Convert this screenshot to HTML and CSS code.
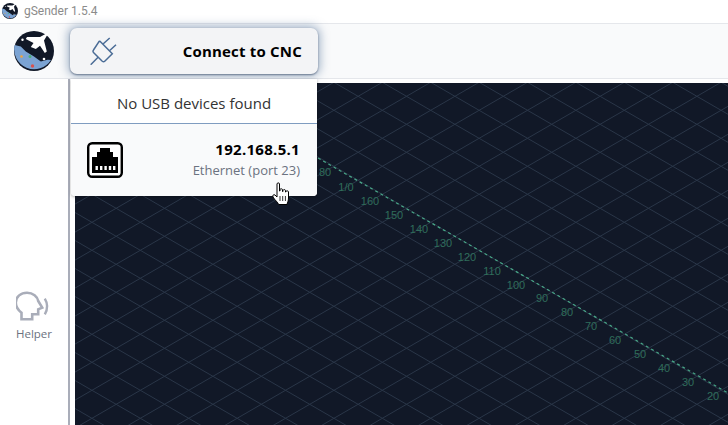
FILE: index.html
```html
<!DOCTYPE html>
<html>

<head>
  <title>gSender</title>
  <link rel="stylesheet" href="styles.css">
</head>

<body>

  <div class="titlebar">
    <svg class="title-logo" viewBox="0 0 40 40">
      <use href="#logo"></use>
    </svg>
    <span>gSender 1.5.4</span>
  </div>

  <div class="toolbar">
    <svg class="app-logo" viewBox="0 0 40 40">
      <defs>
        <g id="logo">
          <circle cx="20" cy="20" r="20" fill="#111827"></circle>
          <path d="M0.6 14 L6.8 15.5 L11.8 20.5 L20 25.5 L26.8 30.5 L33.5 28.8 L37 29 A20 20 0 0 1 0.6 14 Z" fill="#7ba3d3"></path>
          <path d="M35 1 L26 6 L13 6 L11.8 8 L19.5 12 L16.8 16 L21.8 18 L26 14.8 L30.8 22 L32.8 20.5 L30 9.5 Z" fill="#fff"></path>
          <circle cx="8.5" cy="8.8" r="1.2" fill="#fff"></circle>
          <circle cx="30" cy="28" r="1.3" fill="#fff"></circle>
          <circle cx="7.5" cy="25.5" r="1.3" fill="#f2a33a"></circle>
          <circle cx="16" cy="25.5" r="1.5" fill="#4caf7a"></circle>
          <circle cx="18.5" cy="35" r="1.7" fill="#d9534f"></circle>
        </g>
      </defs>
      <use href="#logo"></use>
    </svg>
    <button class="connect-btn">
      <svg class="plug" viewBox="0 0 28 28">
        <path d="M0.7 27.7 L8.3 20 M9 4.5 Q10 4 11 5.2 L22.3 16.7 L14.5 24.5 Q13.5 25.2 12 24 L3.5 15.5 Q2.5 14.3 3.5 13 Z M13.3 6.7 L19.7 1 M20 13.3 L26 7.7" fill="none" stroke="#4a6c96" stroke-width="1.5"></path>
      </svg>
      <span>Connect to CNC</span>
    </button>
  </div>

  <div class="main">
    <div class="sidebar">
      <div class="helper">
        <svg class="helper-icon" viewBox="1.5 0 35 30">
          <path d="M7 28.3 L7 21.7 C3 18.5 1.3 15.5 1.3 11.7 C1.3 5.5 6.5 1.7 12.5 1.7 C18.5 1.7 23 5.5 23.7 10 L27.7 16.7 L23.7 18.3 L23.7 23.3 L17.7 23.3 L17.7 28.3 Z" fill="none" stroke="#a9adb9" stroke-width="2.6"></path>
          <path d="M30.3 7.7 C33.2 12.5 33.2 18.5 30.3 23.3" fill="none" stroke="#a9adb9" stroke-width="2.4"></path>
        </svg>
        <span>Helper</span>
      </div>
    </div>
    <div class="canvas">
      <svg class="grid" width="653" height="342">
        <!-- falling lines, then rising lines, 28px apart -->
        <path class="mesh" d="M0 -374.5 l653 377.8 M0 -346.5 l653 377.8 M0 -318.5 l653 377.8 M0 -290.5 l653 377.8 M0 -262.5 l653 377.8 M0 -234.5 l653 377.8 M0 -206.5 l653 377.8 M0 -178.5 l653 377.8 M0 -150.5 l653 377.8 M0 -122.5 l653 377.8 M0 -94.5 l653 377.8 M0 -66.5 l653 377.8 M0 -38.5 l653 377.8 M0 -10.5 l653 377.8 M0 17.5 l653 377.8 M0 45.5 l653 377.8 M0 73.5 l653 377.8 M0 101.5 l653 377.8 M0 129.5 l653 377.8 M0 157.5 l653 377.8 M0 185.5 l653 377.8 M0 213.5 l653 377.8 M0 241.5 l653 377.8 M0 269.5 l653 377.8 M0 297.5 l653 377.8 M0 325.5 l653 377.8"></path>
        <path class="mesh" d="M0 9.1 l653 -377.8 M0 37.1 l653 -377.8 M0 65.1 l653 -377.8 M0 93.1 l653 -377.8 M0 121.1 l653 -377.8 M0 149.1 l653 -377.8 M0 177.1 l653 -377.8 M0 205.1 l653 -377.8 M0 233.1 l653 -377.8 M0 261.1 l653 -377.8 M0 289.1 l653 -377.8 M0 317.1 l653 -377.8 M0 345.1 l653 -377.8 M0 373.1 l653 -377.8 M0 401.1 l653 -377.8 M0 429.1 l653 -377.8 M0 457.1 l653 -377.8 M0 485.1 l653 -377.8 M0 513.1 l653 -377.8 M0 541.1 l653 -377.8 M0 569.1 l653 -377.8 M0 597.1 l653 -377.8 M0 625.1 l653 -377.8 M0 653.1 l653 -377.8 M0 681.1 l653 -377.8 M0 709.1 l653 -377.8"></path>
        <line class="axis" x1="243" y1="75" x2="653" y2="310"></line>
        <g class="ticks">
          <text x="250" y="93">80</text>
          <text x="271" y="108">1/0</text>
          <text x="295" y="122">160</text>
          <text x="319" y="136">150</text>
          <text x="344" y="150">140</text>
          <text x="368" y="164">130</text>
          <text x="392" y="178">120</text>
          <text x="417" y="192">110</text>
          <text x="441" y="206">100</text>
          <text x="467" y="219">90</text>
          <text x="492" y="233">80</text>
          <text x="516" y="247">70</text>
          <text x="540" y="261">60</text>
          <text x="565" y="275">50</text>
          <text x="589" y="289">40</text>
          <text x="613" y="303">30</text>
          <text x="638" y="317">20</text>
        </g>
      </svg>
    </div>
  </div>

  <div class="dropdown">
    <div class="dropdown-head">No USB devices found</div>
    <div class="device">
      <svg class="eth" viewBox="0 0 36 36">
        <rect x="1.2" y="1.2" width="33.6" height="33.6" rx="4" fill="#fff" stroke="#000" stroke-width="2.4"></rect>
        <path d="M5 31 L5 15 L10 15 L10 10 L13 10 L13 6 L23 6 L23 10 L26 10 L26 15 L31 15 L31 31 Z" fill="#000"></path>
        <path d="M8.5 24 h2.4 v4 h-2.4 Z M13 24 h2.4 v4 h-2.4 Z M17.4 24 h2.4 v4 h-2.4 Z M21.8 24 h2.4 v4 h-2.4 Z M26 24 h2.4 v4 h-2.4 Z" fill="#fff"></path>
      </svg>
      <div class="device-info">
        <strong>192.168.5.1</strong>
        <span>Ethernet (port 23)</span>
      </div>
    </div>
  </div>

  <svg class="cursor" viewBox="0 0 18 24">
    <path d="M5 2 C5 0.5 7.5 0.5 7.5 2 L7.5 9 L8 9 L8 7.5 C8.5 6.5 10.5 6.5 10.5 7.8 L10.5 9.5 L11 9.5 L11 8.3 C11.5 7.3 13.3 7.3 13.5 8.6 L13.5 10 L14 10 L14 9.5 C14.5 8.5 16.5 8.7 16.5 10 L16.5 16 C16.5 19 15.5 20 15 22.5 L6.5 22.5 C6 20 3 18.5 1 15 C0.3 13.5 1.5 12 3 13 L5 15 Z" fill="#fff" stroke="#000" stroke-width="1"></path>
    <path d="M8 14 V19 M10.7 14 V19 M13.4 14 V19" stroke="#000" stroke-width="0.8"></path>
  </svg>

</body>

</html>
```

FILE: styles.css
```css
* {
  box-sizing: border-box;
}

html, body {
  height: 100%;
}

body {
  margin: 0;
  overflow: hidden;
  background: #fff;
  font-family: "Open Sans", sans-serif;
}

.titlebar {
  display: flex;
  align-items: center;
  gap: 6px;
  height: 24px;
  padding: 0 0 2px 2px;
  background: #fff;
  border-bottom: 1px solid #e5e7eb;
  font-family: Roboto, sans-serif;
  font-size: 12px;
  color: #8b8b8b;
}

.title-logo {
  width: 16px;
  height: 16px;
}

.toolbar {
  display: flex;
  align-items: center;
  gap: 16px;
  height: 55px;
  padding: 0 0 1px 14px;
  background: #f9fafb;
  border-bottom: 1px solid #e5e7eb;
}

.app-logo {
  width: 40px;
  height: 40px;
  margin-top: 1px;
}

.connect-btn {
  display: flex;
  align-items: center;
  justify-content: space-between;
  width: 248px;
  height: 46px;
  padding: 0 16px 0 20px;
  border: 0;
  border-radius: 7px;
  background: #f3f4f6;
  box-shadow: 0 1px 2px #6b7a90, 0 0 10px 2px rgba(74, 108, 150, 0.5);
  font-family: inherit;
  font-size: 15px;
  font-weight: 700;
  letter-spacing: 0.2px;
  color: #000;
}

.plug {
  width: 28px;
  height: 28px;
}

.main {
  display: flex;
  height: 346px;
}

.sidebar {
  display: flex;
  flex-direction: column;
  align-items: center;
  justify-content: flex-end;
  width: 70px;
  padding: 0 0 84px 0;
  background: #fff;
  border-right: 2px solid #a9adb9;
}

.helper {
  display: flex;
  flex-direction: column;
  align-items: center;
  gap: 5px;
  font-size: 11.5px;
  color: #6b7280;
}

.helper-icon {
  width: 35px;
  height: 30px;
}

.canvas {
  flex: 1;
  margin: 4px 0 0 5px;
  background: #111827;
}

.grid {
  display: block;
}

.mesh {
  fill: none;
  stroke: #2a3648;
  stroke-width: 1;
}

.axis {
  stroke: #48a888;
  stroke-width: 1.2;
  stroke-dasharray: 3 3;
}

.ticks text {
  fill: #2f6d5a;
  font-family: "Liberation Sans", sans-serif;
  font-size: 11px;
  text-anchor: middle;
}

.dropdown {
  position: absolute;
  top: 79px;
  left: 71px;
  width: 246px;
  border-radius: 0 0 4px 4px;
  background: #fff;
  box-shadow: 0 1px 3px rgba(0, 0, 0, 0.3);
}

.dropdown-head {
  height: 45px;
  border-bottom: 1px solid #7f9cc0;
  font-size: 15px;
  line-height: 48px;
  text-align: center;
  color: #333;
}

.device {
  display: flex;
  align-items: center;
  justify-content: space-between;
  height: 72px;
  padding: 0 17px 0 16px;
  background: #f9fafb;
  border-radius: 0 0 4px 4px;
}

.eth {
  width: 36px;
  height: 36px;
}

.device-info {
  display: flex;
  flex-direction: column;
  align-items: flex-end;
  gap: 2px;
  padding-bottom: 2px;
}

.device-info strong {
  font-size: 15px;
  letter-spacing: 0.3px;
  color: #000;
}

.device-info span {
  font-size: 13px;
  color: #6b7280;
}

.cursor {
  position: absolute;
  top: 182px;
  left: 272px;
  width: 18px;
  height: 24px;
}
```
